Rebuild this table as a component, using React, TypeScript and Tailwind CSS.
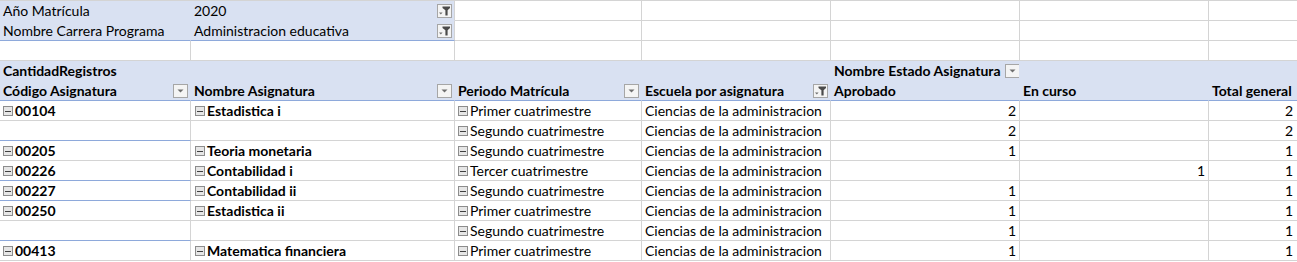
import React from "react";

const W = ["w-[191px]", "w-[264px]", "w-[187px]", "w-[189px]", "w-[189px]", "w-[189px]", "w-[89px]"];

function DropBtn() {
  return (
    <span className="ml-auto mr-[2px] flex h-[14px] w-[15px] shrink-0 items-center justify-center border border-[#a6a6a6] bg-[#f4f4f4]">
      <svg width="9" height="5" viewBox="0 0 9 5">
        <path d="M1.5 0.5 L7.5 0.5 L4.5 3.5 Z" fill="#6e6e6e" />
      </svg>
    </span>
  );
}

function FilterBtn() {
  return (
    <span className="ml-auto mr-[2px] flex h-[14px] w-[15px] shrink-0 items-center justify-center border border-[#a6a6a6] bg-[#f4f4f4]">
      <svg width="13" height="12" viewBox="0 0 13 12">
        <path d="M4.5 1.5 H12 V3 L9.6 5.2 V10.5 H7.4 V5.2 L4.5 3 Z" fill="#4a4a4a" />
        <path d="M1 7.5 H4.6 L2.8 9.4 Z" fill="#6e6e6e" />
      </svg>
    </span>
  );
}

function Minus() {
  return (
    <span className="mr-[2px] ml-[2px] flex h-[10px] w-[10px] shrink-0 items-center justify-center border border-[#8c8c8c] bg-[#e6e6e6]">
      <span className="h-[1px] w-[6px] bg-[#404040]" />
    </span>
  );
}

type Row = {
  a: string;
  b: string;
  c: string;
  e: string;
  f: string;
  g: string;
  aBlue?: boolean;
};

const rows: Row[] = [
  { a: "00104", b: "Estadistica i", c: "Primer cuatrimestre", e: "2", f: "", g: "2" },
  { a: "", b: "", c: "Segundo cuatrimestre", e: "2", f: "", g: "2", aBlue: true },
  { a: "00205", b: "Teoria monetaria", c: "Segundo cuatrimestre", e: "1", f: "", g: "1" },
  { a: "00226", b: "Contabilidad i", c: "Tercer cuatrimestre", e: "", f: "1", g: "1", aBlue: true },
  { a: "00227", b: "Contabilidad ii", c: "Segundo cuatrimestre", e: "1", f: "", g: "1", aBlue: true },
  { a: "00250", b: "Estadistica ii", c: "Primer cuatrimestre", e: "1", f: "", g: "1" },
  { a: "", b: "", c: "Segundo cuatrimestre", e: "1", f: "", g: "1", aBlue: true },
  { a: "00413", b: "Matematica financiera", c: "Primer cuatrimestre", e: "1", f: "", g: "1" },
];

const cell = "flex h-[20px] shrink-0 items-center overflow-hidden whitespace-nowrap border-r border-b pt-[1px]";
const grey = "border-[#d4d4d4]";

export default function App() {
  return (
    <div
      className="h-[262px] w-[1297px] overflow-hidden border-t border-[#d4d4d4] bg-white text-[14px] leading-none text-black"
      style={{ fontFamily: "Lato, 'Liberation Sans', sans-serif" }}
    >
      {/* Row 1 */}
      <div className="flex">
        <div className={`${cell} ${W[0]} border-[#d9e1f2] bg-[#d9e1f2] pl-[3px]`}>Año Matrícula</div>
        <div className={`${cell} ${W[1]} border-b-[#d9e1f2] border-r-[#d4d4d4] bg-[#d9e1f2] pl-[3px]`}>
          <span>2020</span>
          <FilterBtn />
        </div>
        <div className={`${cell} ${W[2]} ${grey}`} />
        <div className={`${cell} ${W[3]} ${grey}`} />
        <div className={`${cell} ${W[4]} ${grey}`} />
        <div className={`${cell} ${W[5]} ${grey}`} />
        <div className={`${cell} ${W[6]} ${grey}`} />
      </div>
      {/* Row 2 */}
      <div className="flex">
        <div className={`${cell} ${W[0]} border-r-[#d9e1f2] border-b-[#8ea9db] bg-[#d9e1f2] pl-[3px]`}>Nombre Carrera Programa</div>
        <div className={`${cell} ${W[1]} border-b-[#8ea9db] border-r-[#d4d4d4] bg-[#d9e1f2] pl-[3px]`}>
          <span>Administracion educativa</span>
          <FilterBtn />
        </div>
        <div className={`${cell} ${W[2]} ${grey}`} />
        <div className={`${cell} ${W[3]} ${grey}`} />
        <div className={`${cell} ${W[4]} ${grey}`} />
        <div className={`${cell} ${W[5]} ${grey}`} />
        <div className={`${cell} ${W[6]} ${grey}`} />
      </div>
      {/* Row 3 */}
      <div className="flex">
        {W.map((w, i) => (
          <div key={i} className={`${cell} ${w} ${grey}`} />
        ))}
      </div>
      {/* Row 4 */}
      <div className="flex bg-[#d9e1f2] font-bold">
        <div className={`${cell} ${W[0]} border-[#d9e1f2] pl-[3px]`}>CantidadRegistros</div>
        <div className={`${cell} ${W[1]} border-[#d9e1f2]`} />
        <div className={`${cell} ${W[2]} border-[#d9e1f2]`} />
        <div className={`${cell} ${W[3]} border-[#d9e1f2]`} />
        <div className={`${cell} ${W[4]} border-[#d9e1f2] pl-[3px]`}>
          <span>Nombre Estado Asignatura</span>
          <span className="ml-[4px] flex h-[14px] w-[15px] shrink-0 items-center justify-center border border-[#a6a6a6] bg-[#f4f4f4]">
            <svg width="9" height="5" viewBox="0 0 9 5">
              <path d="M1.5 0.5 L7.5 0.5 L4.5 3.5 Z" fill="#6e6e6e" />
            </svg>
          </span>
        </div>
        <div className={`${cell} ${W[5]} border-[#d9e1f2]`} />
        <div className={`${cell} ${W[6]} border-[#d9e1f2]`} />
      </div>
      {/* Row 5 */}
      <div className="flex bg-[#d9e1f2] font-bold">
        <div className={`${cell} ${W[0]} border-r-[#d9e1f2] border-b-[#8ea9db] pl-[3px]`}>
          <span>Código Asignatura</span>
          <DropBtn />
        </div>
        <div className={`${cell} ${W[1]} border-r-[#d9e1f2] border-b-[#8ea9db] pl-[3px]`}>
          <span>Nombre Asignatura</span>
          <DropBtn />
        </div>
        <div className={`${cell} ${W[2]} border-r-[#d9e1f2] border-b-[#8ea9db] pl-[3px]`}>
          <span>Periodo Matrícula</span>
          <DropBtn />
        </div>
        <div className={`${cell} ${W[3]} border-r-[#d9e1f2] border-b-[#8ea9db] pl-[3px]`}>
          <span>Escuela por asignatura</span>
          <FilterBtn />
        </div>
        <div className={`${cell} ${W[4]} border-r-[#d9e1f2] border-b-[#8ea9db] pl-[3px]`}>Aprobado</div>
        <div className={`${cell} ${W[5]} border-r-[#d9e1f2] border-b-[#8ea9db] pl-[3px]`}>En curso</div>
        <div className={`${cell} ${W[6]} border-r-[#d9e1f2] border-b-[#8ea9db] pl-[3px]`}>Total general</div>
      </div>
      {/* Data rows */}
      {rows.map((r, i) => (
        <div key={i} className="flex">
          <div
            className={`${cell} ${W[0]} border-r-[#d4d4d4] ${r.aBlue ? "border-b-[#8ea9db]" : "border-b-[#d4d4d4]"} pl-[1px] font-bold`}
          >
            {r.a && (
              <>
                <Minus />
                <span>{r.a}</span>
              </>
            )}
          </div>
          <div className={`${cell} ${W[1]} ${grey} pl-[2px] font-bold`}>
            {r.b && (
              <>
                <Minus />
                <span>{r.b}</span>
              </>
            )}
          </div>
          <div className={`${cell} ${W[2]} ${grey} pl-[1px]`}>
            <Minus />
            <span>{r.c}</span>
          </div>
          <div className={`${cell} ${W[3]} ${grey} pl-[3px]`}>Ciencias de la administracion</div>
          <div className={`${cell} ${W[4]} ${grey} justify-end pr-[3px]`}>{r.e}</div>
          <div className={`${cell} ${W[5]} ${grey} justify-end pr-[3px]`}>{r.f}</div>
          <div className={`${cell} ${W[6]} ${grey} justify-end pr-[4px]`}>{r.g}</div>
        </div>
      ))}
    </div>
  );
}
